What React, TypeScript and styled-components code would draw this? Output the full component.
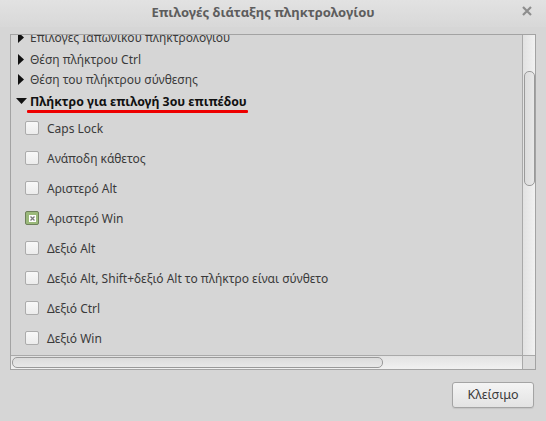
import React from "react";
import styled, { createGlobalStyle } from "styled-components";

const Global = createGlobalStyle`
  html, body { margin: 0; padding: 0; }
  body {
    width: 546px; height: 421px; overflow: hidden;
    background: #d6d6d6;
    font-family: "Noto Sans", "Open Sans", sans-serif;
  }
`;

const Window = styled.div`
  width: 546px; height: 421px;
  display: flex; flex-direction: column;
  background: #d6d6d6;
`;

const TitleBar = styled.div`
  height: 27px;
  flex: none;
  display: flex; align-items: center; justify-content: center;
  position: relative;
  padding-right: 20px;
  background: linear-gradient(#e2e2e2, #d8d8d8);
`;

const Title = styled.div`
  font-size: 13px; font-weight: 700; color: #5d5d5d;
  padding-bottom: 4px;
`;

const Close = styled.div`
  position: absolute; right: 12px; top: 4px;
  width: 14px; height: 14px;
  display: flex; align-items: center; justify-content: center;
`;

const Body = styled.div`
  flex: 1;
  padding: 7px 10px 0 10px;
  display: flex; flex-direction: column;
`;

const Frame = styled.div`
  height: 336px;
  border: 1px solid #a3a3a3;
  display: grid;
  grid-template-columns: 1fr 13px;
  grid-template-rows: 1fr 14px;
  box-sizing: border-box;
`;

const Viewport = styled.div`
  overflow: hidden;
  position: relative;
`;

const List = styled.div`
  margin-top: -10px;
  display: flex; flex-direction: column;
`;

const ExpRow = styled.div<{ $bold?: boolean; $h: number }>`
  height: ${(p) => p.$h}px;
  display: flex; align-items: center;
  padding-left: 3px;
  font-size: ${(p) => (p.$bold ? "12.3px" : "12px")};
  color: ${(p) => (p.$bold ? "#111" : "#3a3a3a")};
  font-weight: ${(p) => (p.$bold ? 700 : 400)};
  position: relative;
  white-space: nowrap;
`;

const Arrow = styled.span`
  width: 14px; height: 12px; flex: none;
  display: flex; align-items: center; justify-content: center;
  margin-right: 2px;
`;

const Underline = styled.div`
  position: absolute; left: 16px; top: 21px;
  width: 221px; height: 3px;
  background: #ee0000;
  border-radius: 1px;
`;

const CheckRow = styled.div`
  height: 30px;
  display: flex; align-items: center;
  padding-left: 14px;
  font-size: 12px; color: #3a3a3a;
  white-space: nowrap;
`;

const Box = styled.span<{ $checked?: boolean }>`
  width: 12px; height: 12px; flex: none;
  border: 1px solid ${(p) => (p.$checked ? "#6d7f5a" : "#acacac")};
  border-radius: 2px;
  margin-right: 8px;
  background: ${(p) =>
    p.$checked ? "#9bb97b" : "linear-gradient(#f8f8f8, #ececec)"};
  display: flex; align-items: center; justify-content: center;
`;

const VTrough = styled.div`
  border-left: 1px solid #a9a9a9;
  background: linear-gradient(90deg, #e2e2e2, #f1f1f1);
  position: relative;
`;

const VThumb = styled.div`
  position: absolute; left: 1px; top: 36px;
  width: 9px; height: 113px;
  border: 1px solid #9a9a9a;
  border-radius: 5px;
  background: linear-gradient(90deg, #dcdcdc, #e8e8e8);
`;

const HTrough = styled.div`
  border-top: 1px solid #a9a9a9;
  background: linear-gradient(#e2e2e2, #f1f1f1);
  position: relative;
`;

const HThumb = styled.div`
  position: absolute; left: 1px; top: 1px;
  width: 369px; height: 9px;
  border: 1px solid #9a9a9a;
  border-radius: 5px;
  background: linear-gradient(#dcdcdc, #e8e8e8);
`;

const Corner = styled.div`
  border-top: 1px solid #a9a9a9;
  border-left: 1px solid #a9a9a9;
  background: #dcdcdc;
`;

const Footer = styled.div`
  display: flex; justify-content: flex-end;
  padding-top: 12px;
  padding-right: 2px;
`;

const Button = styled.button`
  width: 82px; height: 26px;
  border: 1px solid #a4a4a4;
  border-radius: 3px;
  background: linear-gradient(#f4f4f4, #e3e3e3);
  font-family: "Noto Sans", "Open Sans", sans-serif;
  font-size: 12.5px; color: #3a3a3a;
  padding: 0 0 2px 0;
  box-shadow: 0 1px 1px rgba(0,0,0,0.08);
`;

const RightTri = () => (
  <svg width="8" height="11" viewBox="0 0 8 11">
    <path d="M1 0 L7 5.5 L1 11 Z" fill="#111" />
  </svg>
);
const DownTri = () => (
  <svg width="11" height="8" viewBox="0 0 11 8">
    <path d="M0 1 L11 1 L5.5 7 Z" fill="#111" />
  </svg>
);

const items = [
  "Caps Lock",
  "Ανάποδη κάθετος",
  "Αριστερό Alt",
  "Αριστερό Win",
  "Δεξιό Alt",
  "Δεξιό Alt, Shift+δεξιό Alt το πλήκτρο είναι σύνθετο",
  "Δεξιό Ctrl",
  "Δεξιό Win",
];

export default function App() {
  return (
    <>
      <Global />
      <Window>
        <TitleBar>
          <Title>Επιλογές διάταξης πληκτρολογίου</Title>
          <Close>
            <svg width="10" height="10" viewBox="0 0 10 10">
              <path d="M1 1 L9 9 M9 1 L1 9" stroke="#8d8d8d" strokeWidth="2.2" />
            </svg>
          </Close>
        </TitleBar>
        <Body>
          <Frame>
            <Viewport>
              <List>
                <ExpRow $h={24}>
                  <Arrow><RightTri /></Arrow>Επιλογές Ιαπωνικού πληκτρολογίου
                </ExpRow>
                <ExpRow $h={20}>
                  <Arrow><RightTri /></Arrow>Θέση πλήκτρου Ctrl
                </ExpRow>
                <ExpRow $h={20}>
                  <Arrow><RightTri /></Arrow>Θέση του πλήκτρου σύνθεσης
                </ExpRow>
                <ExpRow $h={24} $bold>
                  <Arrow><DownTri /></Arrow>Πλήκτρο για επιλογή 3ου επιπέδου
                  <Underline />
                </ExpRow>
                {items.map((t) => {
                  const checked = t === "Αριστερό Win";
                  return (
                    <CheckRow key={t}>
                      <Box $checked={checked}>
                        {checked && (
                          <svg width="7" height="7" viewBox="0 0 7 7">
                            <rect x="0" y="0" width="7" height="7" fill="#fff" />
                            <path d="M1.5 1.5 L5.5 5.5 M5.5 1.5 L1.5 5.5" stroke="#7a7a7a" strokeWidth="1.3" />
                          </svg>
                        )}
                      </Box>
                      {t}
                    </CheckRow>
                  );
                })}
              </List>
            </Viewport>
            <VTrough><VThumb /></VTrough>
            <HTrough><HThumb /></HTrough>
            <Corner />
          </Frame>
          <Footer>
            <Button>Κλείσιμο</Button>
          </Footer>
        </Body>
      </Window>
    </>
  );
}
